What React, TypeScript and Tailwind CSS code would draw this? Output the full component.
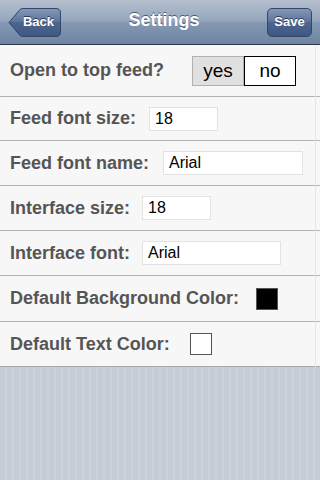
import React, { useState } from "react";

function BackButton() {
  return (
    <button className="relative flex h-[29px] w-[53px] items-center justify-center pl-[8px]">
      <svg className="absolute inset-0" width="53" height="29" viewBox="0 0 53 29">
        <defs>
          <linearGradient id="bk" x1="0" y1="0" x2="0" y2="1">
            <stop offset="0" stopColor="#8598b6" />
            <stop offset="0.5" stopColor="#5a729a" />
            <stop offset="0.5" stopColor="#4c668f" />
            <stop offset="1" stopColor="#3e5884" />
          </linearGradient>
        </defs>
        <path
          d="M1 14.5 L12 1.5 Q13 0.5 15 0.5 L48 0.5 Q52.5 0.5 52.5 5 L52.5 24 Q52.5 28.5 48 28.5 L15 28.5 Q13 28.5 12 27.5 Z"
          fill="url(#bk)"
          stroke="#34466a"
        />
      </svg>
      <span className="relative text-[13px] font-bold text-white [text-shadow:0_-1px_0_#2c3b57]">Back</span>
    </button>
  );
}

function Field({ value, w }: { value: string; w: string }) {
  return (
    <div className={`${w} flex h-[24px] items-center border border-[#e2e2e2] bg-white pl-[5px] text-[16px] font-normal text-black`}>
      {value}
    </div>
  );
}

export default function App() {
  const [top, setTop] = useState(false);

  return (
    <div className="flex h-[480px] w-[320px] flex-col font-['Liberation_Sans',Arial,sans-serif]">
      {/* nav bar */}
      <div className="flex h-[45px] items-center justify-between border-b border-[#2d3642] bg-[linear-gradient(#b5c0cf,#93a4bb_50%,#8599b3_50%,#6e84a2)] px-[8px]">
        <BackButton />
        <div className="-mt-[4px] text-[18px] font-bold text-white [text-shadow:0_-1px_0_#4a5a72]">Settings</div>
        <button className="flex h-[29px] w-[45px] items-center justify-center rounded-[5px] border border-[#34466a] bg-[linear-gradient(#8598b6,#5a729a_50%,#4c668f_50%,#3e5884)] text-[13px] font-bold text-white [text-shadow:0_-1px_0_#2c3b57]">
          Save
        </button>
      </div>

      {/* settings list */}
      <div className="relative bg-[#f7f7f7] text-[18px] font-bold text-[#555]">
        <div className="flex h-[52px] items-center border-b border-[#b4b4b4] pl-[10px]">
          <span>Open to top feed?</span>
          <div className="ml-[28px] flex h-[30px] font-normal text-black">
            <button
              onClick={() => setTop(true)}
              className={`w-[52px] border text-[19px] ${top ? "border-black bg-white" : "border-[#b0b0b0] bg-[#e0e0e0]"}`}
            >
              yes
            </button>
            <button
              onClick={() => setTop(false)}
              className={`w-[52px] border text-[19px] ${top ? "border-[#b0b0b0] bg-[#e0e0e0]" : "border-black bg-white"}`}
            >
              no
            </button>
          </div>
        </div>
        <div className="flex h-[44px] items-center gap-[13px] border-b border-[#b4b4b4] pl-[10px]">
          <span>Feed font size:</span>
          <Field value="18" w="w-[69px]" />
        </div>
        <div className="flex h-[45px] items-center gap-[14px] border-b border-[#b4b4b4] pl-[10px]">
          <span>Feed font name:</span>
          <Field value="Arial" w="w-[140px]" />
        </div>
        <div className="flex h-[45px] items-center gap-[12px] border-b border-[#b4b4b4] pl-[10px]">
          <span>Interface size:</span>
          <Field value="18" w="w-[69px]" />
        </div>
        <div className="flex h-[45px] items-center gap-[12px] border-b border-[#b4b4b4] pl-[10px]">
          <span>Interface font:</span>
          <Field value="Arial" w="w-[139px]" />
        </div>
        <div className="flex h-[46px] items-center gap-[17px] border-b border-[#b4b4b4] pl-[10px]">
          <span>Default Background Color:</span>
          <div className="h-[22px] w-[22px] border border-[#555] bg-black" />
        </div>
        <div className="flex h-[45px] items-center gap-[20px] border-b border-[#a8a8a8] pl-[10px]">
          <span>Default Text Color:</span>
          <div className="h-[22px] w-[22px] border border-[#555] bg-white" />
        </div>
        <div className="absolute right-[4px] top-0 bottom-0 w-px bg-[#e6e6e6]" />
      </div>

      {/* pinstripe background */}
      <div className="flex-1 bg-[repeating-linear-gradient(90deg,#c5ccd4_0px,#c5ccd4_5px,#cbd2d9_5px,#cbd2d9_7px)]" />
    </div>
  );
}
